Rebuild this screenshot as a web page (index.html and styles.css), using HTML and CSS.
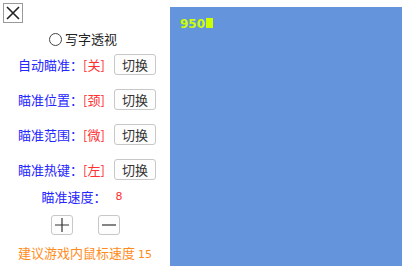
FILE: index.html
```html
<!DOCTYPE html>
<html lang="zh-CN">
<head>
    <meta charset="UTF-8">
    <title>辅助</title>
    <link rel="stylesheet" href="styles.css">
</head>
<body>
    <div class="side">
        <div class="close">
            <svg width="14" height="14" viewBox="0 0 14 14"><path d="M1 1 L13 13 M13 1 L1 13" stroke="#222" stroke-width="1.6" fill="none"/></svg>
        </div>

        <label class="radio-row">
            <span class="radio"></span>写字透视
        </label>

        <div class="row">
            <span class="name">自动瞄准：</span><span class="value">[关]</span>
            <button class="btn">切换</button>
        </div>
        <div class="row">
            <span class="name">瞄准位置：</span><span class="value">[颈]</span>
            <button class="btn">切换</button>
        </div>
        <div class="row">
            <span class="name">瞄准范围：</span><span class="value">[微]</span>
            <button class="btn">切换</button>
        </div>
        <div class="row">
            <span class="name">瞄准热键：</span><span class="value">[左]</span>
            <button class="btn">切换</button>
        </div>

        <div class="speed">
            <span class="name">瞄准速度：</span><span class="num">8</span>
        </div>

        <div class="steps">
            <button class="step">
                <svg width="14" height="14" viewBox="0 0 14 14"><path d="M7 0 V14 M0 7 H14" stroke="#333" stroke-width="1.2"/></svg>
            </button>
            <button class="step">
                <svg width="14" height="14" viewBox="0 0 14 14"><path d="M0 7 H14" stroke="#333" stroke-width="1.2"/></svg>
            </button>
        </div>

        <div class="hint">建议游戏内鼠标速度 <span class="num-o">15</span></div>
    </div>

    <div class="panel">
        <span class="fps">950</span><span class="box"></span>
    </div>
</body>
</html>
```

FILE: styles.css
```css
body {
    margin: 0;
    height: 266px;
    display: flex;
    background-color: #ffffff;
    font-family: "Noto Sans CJK SC", "Liberation Sans", sans-serif;
    font-size: 13px;
    overflow: hidden;
}
.side {
    width: 170px;
    display: flex;
    flex-direction: column;
    align-items: center;
}
.close {
    align-self: flex-start;
    margin: 3px 0 0 3px;
    width: 18px;
    height: 18px;
    border: 1px solid #999;
    display: flex;
    align-items: center;
    justify-content: center;
}
.radio-row {
    margin-top: 9px;
    height: 14px;
    display: flex;
    align-items: center;
    line-height: 14px;
    color: #222;
    margin-right: 4px;
}
.radio {
    width: 11px;
    height: 11px;
    border: 1.5px solid #444;
    border-radius: 50%;
    margin-right: 3px;
}
.row {
    height: 21px;
    margin-top: 8px;
    display: flex;
    align-items: center;
    padding-left: 4px;
}
.row + .row {
    margin-top: 14px;
}
.name {
    color: #2626ff;
    line-height: 14px;
}
.value {
    color: #ff3030;
    line-height: 14px;
}
.btn {
    margin-left: 9px;
    width: 42px;
    height: 21px;
    padding: 0;
    border: 1px solid #c8c8c8;
    border-radius: 3px;
    background-color: #fdfdfd;
    font-family: inherit;
    font-size: 13px;
    color: #333;
}
.speed {
    margin-top: 10px;
    height: 14px;
    line-height: 14px;
    display: flex;
    align-items: center;
    margin-right: 6px;
}
.num {
    margin-left: 9px;
    color: #ff3030;
    font-family: "DejaVu Sans", sans-serif;
    font-size: 11px;
}
.steps {
    margin-top: 11px;
    display: flex;
    gap: 25px;
}
.step {
    width: 22px;
    height: 20px;
    padding: 0;
    border: 1px solid #c8c8c8;
    border-radius: 3px;
    background-color: #fdfdfd;
    display: flex;
    align-items: center;
    justify-content: center;
}
.hint {
    margin-top: 11px;
    height: 14px;
    line-height: 14px;
    color: #ff8c1a;
}
.num-o {
    font-family: "DejaVu Sans", sans-serif;
    font-size: 11px;
}
.panel {
    flex: 1;
    margin-top: 7px;
    background-color: #6495dc;
    padding: 6px 0 0 10px;
}
.fps {
    color: #ccff00;
    font-family: "DejaVu Sans", sans-serif;
    font-weight: bold;
    font-size: 12px;
    line-height: 12px;
}
.box {
    display: inline-block;
    width: 7px;
    height: 10px;
    margin-left: 1px;
    background-color: #ccff00;
}
```
